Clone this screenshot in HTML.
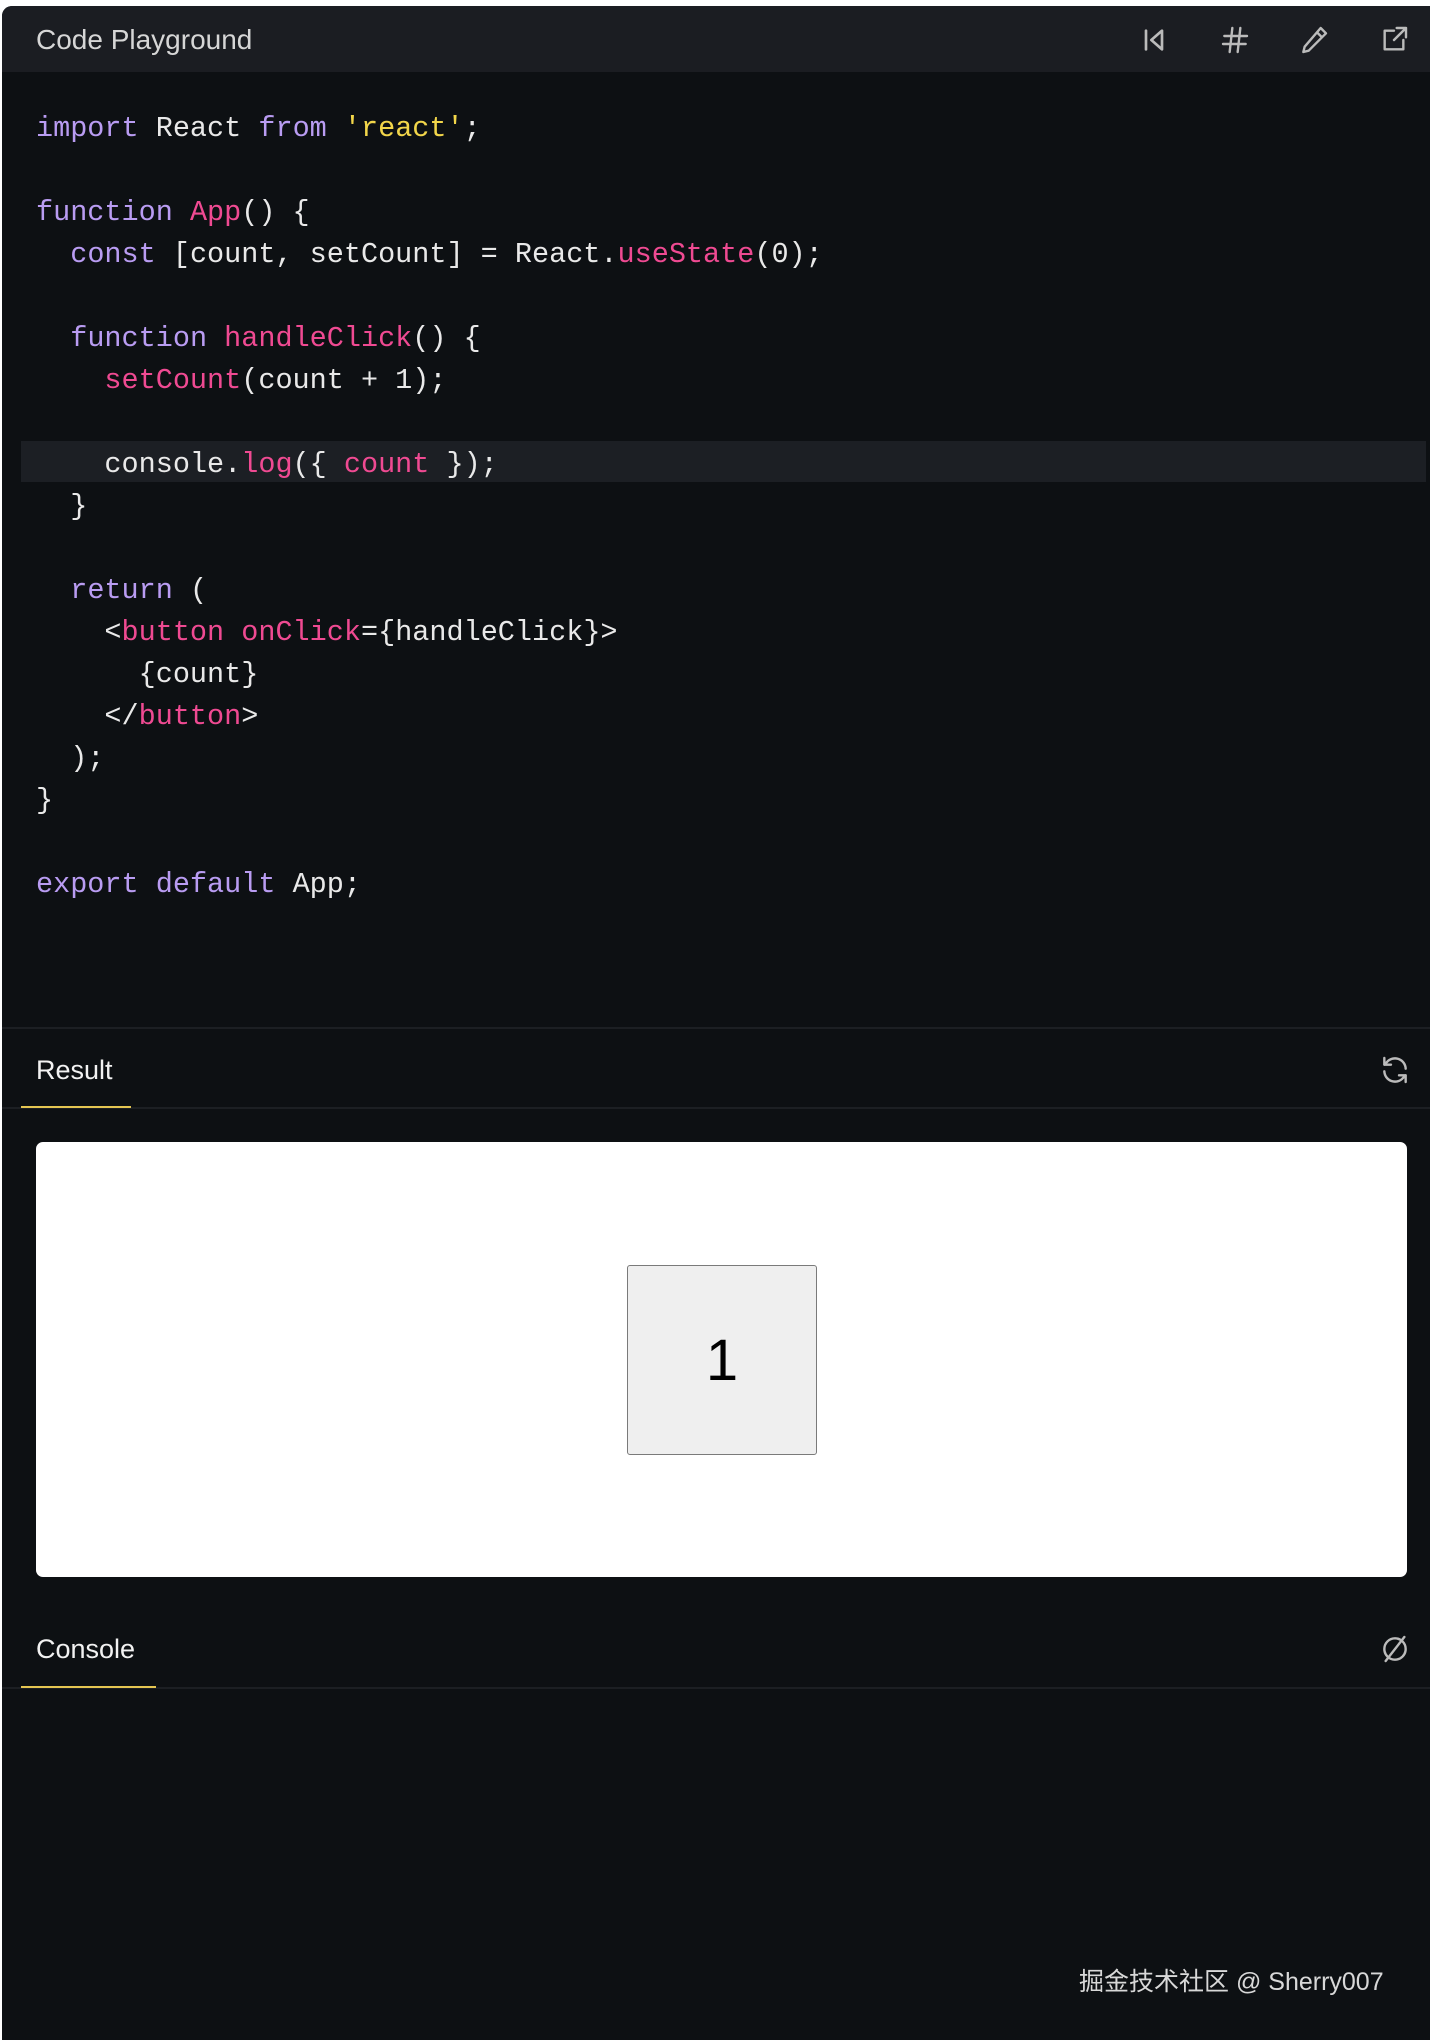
<!DOCTYPE html>
<html><head><meta charset="utf-8"><style>
*{margin:0;padding:0;box-sizing:border-box}
html,body{width:1430px;height:2040px;background:#fff;overflow:hidden}
.wrap{position:absolute;left:2px;top:6px;width:1428px;height:2034px;background:#0d1013;border-top-left-radius:10px;overflow:hidden}
.hdr{position:absolute;left:0;top:0;width:100%;height:66px;background:#1b1d22}
.title{position:absolute;left:34px;top:18px;font:500 28px "Liberation Sans",sans-serif;color:#d6d6d6}
.ico{position:absolute;width:32px;height:32px}
.code{position:absolute;left:34px;top:0;font:28.5px/42px "Liberation Mono",monospace;color:#e9e9e9;white-space:pre}
.k{color:#b99cf2}.f{color:#ef4a92}.s{color:#f2d64a}
.hl{position:absolute;left:19px;top:435px;width:1405px;height:41px;background:#1c1f24}
.sep{position:absolute;left:0;width:100%;height:2px;background:#1c1f23}
.tab{position:absolute;left:34px;font:27px "Liberation Sans",sans-serif;color:#f2f2f2}
.ul{position:absolute;left:19px;height:2px;background:#e4c552}
.prev{position:absolute;left:34px;top:1136px;width:1371px;height:435px;background:#fff;border-radius:7px}
.btn{position:absolute;left:591px;top:123px;width:190px;height:190px;background:#efefef;border:1.5px solid #7a7a7a;border-radius:3px;font:58px "Liberation Sans",sans-serif;color:#000;text-align:center;line-height:190px}
.wm{position:absolute;left:1077px;top:1956px;font:25px "Liberation Sans","Noto Sans CJK SC",sans-serif;color:#d8d8d8}
</style></head><body>
<div class="wrap">
<div class="hdr">
<div class="title">Code Playground</div>
<svg class="ico" style="left:1136px;top:18px" viewBox="0 0 24 24" fill="none" stroke="#bbb" stroke-width="2" stroke-linecap="round" stroke-linejoin="round"><path d="M6 5v14M18 5l-8 7 8 7z"/></svg>
<svg class="ico" style="left:1217px;top:18px" viewBox="0 0 24 24" fill="none" stroke="#bbb" stroke-width="1.8" stroke-linecap="round"><path d="M4 9h17M3 15h17M10 3 8 21M16 3l-2 18"/></svg>
<svg class="ico" style="left:1296px;top:18px" viewBox="0 0 24 24" fill="none" stroke="#bbb" stroke-width="1.8" stroke-linejoin="round"><path d="M17 3l4 4L8 20l-4 1 1-4z M14 6l4 4"/></svg>
<svg class="ico" style="left:1376px;top:18px" viewBox="0 0 24 24" fill="none" stroke="#bbb" stroke-width="1.8" stroke-linecap="round" stroke-linejoin="round"><path d="M12 5H5v14h14v-7M14 3h7v7M21 3l-9 9"/></svg>
</div>
<div class="hl"></div>
<div class="code" style="top:102px"><span class="k">import</span> React <span class="k">from</span> <span class="s">'react'</span>;

<span class="k">function</span> <span class="f">App</span>() {
  <span class="k">const</span> [count, setCount] = React.<span class="f">useState</span>(0);

  <span class="k">function</span> <span class="f">handleClick</span>() {
    <span class="f">setCount</span>(count + 1);

    console.<span class="f">log</span>({ <span class="f">count</span> });
  }

  <span class="k">return</span> (
    &lt;<span class="f">button</span> <span class="f">onClick</span>={handleClick}&gt;
      {count}
    &lt;/<span class="f">button</span>&gt;
  );
}

<span class="k">export</span> <span class="k">default</span> App;</div>
<div class="sep" style="top:1021px"></div>
<div class="tab" style="top:1049px">Result</div>
<svg class="ico" style="left:1377px;top:1048px" viewBox="0 0 24 24" fill="none" stroke="#bbb" stroke-width="1.8" stroke-linecap="round" stroke-linejoin="round"><path d="M20 11a8 8 0 0 0-14-5L4 8M4 3v5h5M4 13a8 8 0 0 0 14 5l2-2M20 21v-5h-5"/></svg>
<div class="sep" style="top:1101px"></div>
<div class="ul" style="top:1100px;width:110px"></div>
<div class="prev"><div class="btn">1</div></div>
<div class="tab" style="top:1628px">Console</div>
<svg class="ico" style="left:1377px;top:1627px" viewBox="0 0 24 24" fill="none" stroke="#bbb" stroke-width="1.8" stroke-linecap="round"><circle cx="12" cy="12" r="8"/><path d="M19 3 5 21"/></svg>
<div class="sep" style="top:1681px"></div>
<div class="ul" style="top:1680px;width:135px"></div>
<div class="wm">掘金技术社区 @ Sherry007</div>
</div>
</body></html>
